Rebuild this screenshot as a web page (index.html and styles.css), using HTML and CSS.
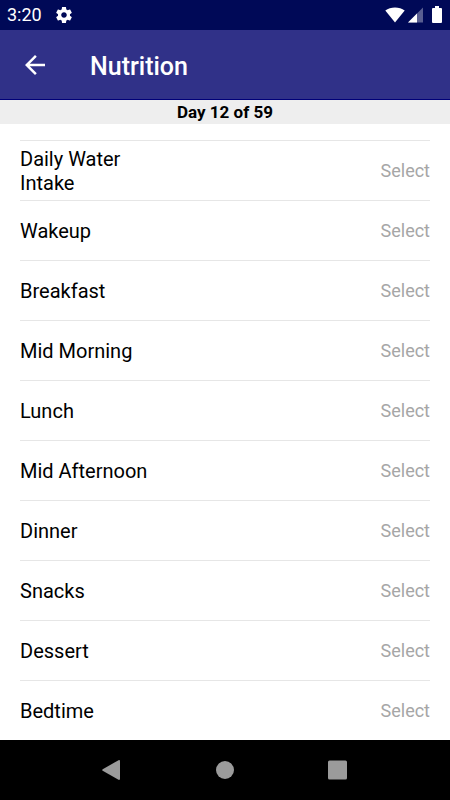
FILE: index.html
```html
<!DOCTYPE html>
<html lang="en">
<head>
<meta charset="UTF-8">
<meta name="viewport" content="width=device-width, initial-scale=1.0">
<title>Nutrition</title>
<link rel="stylesheet" href="styles.css">
</head>
<body>

<!-- status bar -->
<div class="status-bar">
  <span class="clock">3:20</span>
  <svg class="gear" width="16" height="16" viewBox="2 2 20 20" fill="#fff"><path d="M19.43 12.98c.04-.32.07-.64.07-.98s-.03-.66-.07-.98l2.11-1.65c.19-.15.24-.42.12-.64l-2-3.46c-.12-.22-.39-.3-.61-.22l-2.49 1c-.52-.4-1.08-.73-1.69-.98l-.38-2.65C14.46 2.18 14.25 2 14 2h-4c-.25 0-.46.18-.49.42l-.38 2.65c-.61.25-1.17.59-1.69.98l-2.49-1c-.23-.09-.49 0-.61.22l-2 3.46c-.13.22-.07.49.12.64l2.11 1.65c-.04.32-.07.65-.07.98s.03.66.07.98l-2.11 1.65c-.19.15-.24.42-.12.64l2 3.46c.12.22.39.3.61.22l2.49-1c.52.4 1.08.73 1.69.98l.38 2.65c.03.24.24.42.49.42h4c.25 0 .46-.18.49-.42l.38-2.65c.61-.25 1.17-.59 1.69-.98l2.49 1c.23.09.49 0 .61-.22l2-3.46c.12-.22.07-.49-.12-.64l-2.11-1.65zM12 15.5c-1.93 0-3.5-1.57-3.5-3.5s1.57-3.5 3.5-3.5 3.5 1.57 3.5 3.5-1.57 3.5-3.5 3.5z"/></svg>
  <div class="status-icons">
    <svg width="20" height="16" viewBox="0 0 20 16" fill="#fff"><path d="M10 15.500L.3 3.600C3 1.600 6.300.5 10 .5s7 1.100 9.700 3.100z"/></svg>
    <svg width="15" height="16" viewBox="0 0 15 16" fill="#fff"><path d="M0 15.500L15 .5v15z" fill-opacity=".35"/><path d="M0 15.500L9 6.500v9z"/></svg>
    <svg class="battery" width="10" height="18" viewBox="0 0 10 18" fill="#fff"><path d="M3 0h4v2h2a1 1 0 0 1 1 1v13a1 1 0 0 1-1 1H1a1 1 0 0 1-1-1V3a1 1 0 0 1 1-1h2z"/></svg>
  </div>
</div>

<!-- header -->
<header class="header">
  <button class="back" aria-label="Back">
    <svg width="30" height="30" viewBox="0 0 24 24" fill="#fff"><path d="M20 11H7.830l5.590-5.590L12 4l-8 8 8 8 1.410-1.410L7.830 13H20z"/></svg>
  </button>
  <h1>Nutrition</h1>
</header>

<div class="day">Day 12 of 59</div>

<!-- meals -->
<main class="meals">
  <div class="meal"><span class="name" id="water">Daily Water Intake</span><button class="select" aria-describedby="water">Select</button></div>
  <div class="meal"><span class="name" id="wakeup">Wakeup</span><button class="select" aria-describedby="wakeup">Select</button></div>
  <div class="meal"><span class="name" id="breakfast">Breakfast</span><button class="select" aria-describedby="breakfast">Select</button></div>
  <div class="meal"><span class="name" id="morning">Mid Morning</span><button class="select" aria-describedby="morning">Select</button></div>
  <div class="meal"><span class="name" id="lunch">Lunch</span><button class="select" aria-describedby="lunch">Select</button></div>
  <div class="meal"><span class="name" id="afternoon">Mid Afternoon</span><button class="select" aria-describedby="afternoon">Select</button></div>
  <div class="meal"><span class="name" id="dinner">Dinner</span><button class="select" aria-describedby="dinner">Select</button></div>
  <div class="meal"><span class="name" id="snacks">Snacks</span><button class="select" aria-describedby="snacks">Select</button></div>
  <div class="meal"><span class="name" id="dessert">Dessert</span><button class="select" aria-describedby="dessert">Select</button></div>
  <div class="meal"><span class="name" id="bedtime">Bedtime</span><button class="select" aria-describedby="bedtime">Select</button></div>
</main>

<!-- system navigation -->
<nav class="nav-bar">
  <button aria-label="System back"><svg width="20" height="20" viewBox="0 0 20 20" fill="#9b9b9b"><path d="M15.500.2q1.500-.6 1.500 1v17.600q0 1.600-1.500 1L-.3 10.800q-1-.8 0-1.600z"/></svg></button>
  <button aria-label="Home"><svg width="20" height="20" viewBox="0 0 20 20" fill="#9b9b9b"><circle cx="10" cy="10" r="9"/></svg></button>
  <button aria-label="Recent apps"><svg width="20" height="20" viewBox="0 0 20 20" fill="#9b9b9b"><rect y=".5" width="19" height="19" rx="1.500"/></svg></button>
</nav>

</body>
</html>
```
FILE: styles.css
```css
* {
  box-sizing: border-box;
}

body {
  margin: 0;
  min-height: 100vh;
  display: flex;
  flex-direction: column;
  font-family: Roboto, sans-serif;
  background-color: #fff;
  color: #000;
}

button {
  padding: 0;
  border: none;
  background: none;
  font-family: inherit;
  cursor: pointer;
}

svg {
  display: block;
  overflow: visible;
}

/* status bar */
.status-bar {
  display: flex;
  align-items: center;
  height: 30px;
  padding: 0 8px 0 7px;
  background-color: #000957;
  color: #fff;
}

.clock {
  font-size: 18px;
  line-height: 32px;
}

.gear {
  margin-left: 14px;
}

.status-icons {
  display: flex;
  align-items: center;
  gap: 3px;
  margin-left: auto;
}

.battery {
  margin-left: 6px;
}

/* header */
.header {
  display: flex;
  align-items: center;
  height: 70px;
  padding: 0 20px;
  background-color: #303188;
  border-bottom: 1px solid #000078;
  color: #fff;
}

.header h1 {
  margin: 0 0 0 40px;
  padding-top: 3px;
  font-size: 25px;
  font-weight: 500;
}

.day {
  background-color: #eee;
  font-size: 17px;
  font-weight: bold;
  line-height: 24px;
  text-align: center;
}

/* meals */
.meals {
  flex: 1;
  padding: 16px 20px 0;
}

.meal {
  display: flex;
  align-items: center;
  justify-content: space-between;
  height: 60px;
  border-top: 1px solid #e6e6e6;
}

.name {
  max-width: 136px;
  font-size: 20px;
  line-height: 24px;
}

.select {
  color: #a6a6a6;
  font-size: 18px;
  line-height: 24px;
}

/* system navigation */
.nav-bar {
  display: flex;
  height: 60px;
  padding: 0 12.5%;
  background-color: #000;
}

.nav-bar button {
  flex: 1;
  display: flex;
  align-items: center;
  justify-content: center;
}
```
